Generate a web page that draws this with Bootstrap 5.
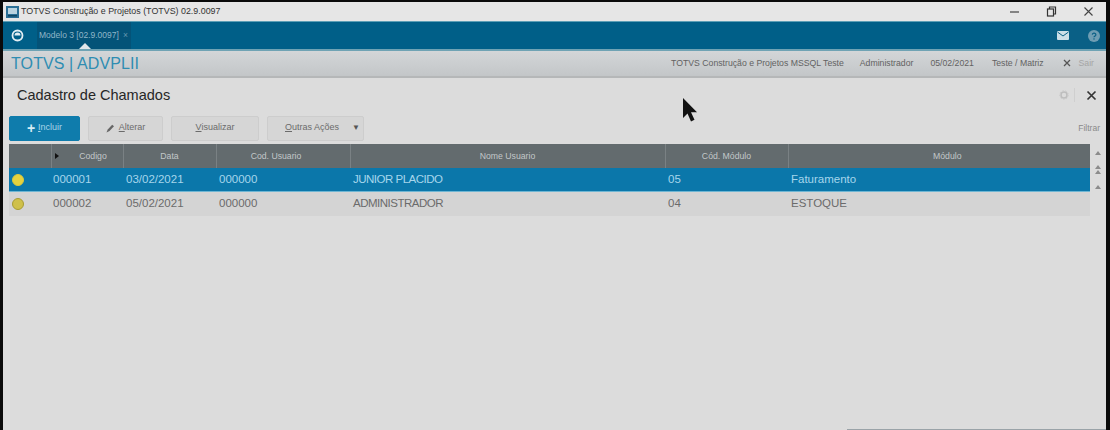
<!DOCTYPE html>
<html lang="pt-BR">
<head>
    <meta charset="UTF-8">
    <title>Cadastro de Chamados</title>
    <link href="https://cdn.jsdelivr.net/npm/bootstrap@5.3.0/dist/css/bootstrap.min.css" rel="stylesheet">
    <style>
        html, body { height: 100%; overflow: hidden; }
        body { font-family: "Liberation Sans", Arial, sans-serif; background: #0a0a0a; color: #666; padding: 2px 4px 0 3px; }
        .app-frame { height: 428px; background: #dcdcdc; }
        .title-bar { height: 19px; background: #e6e6e6; color: #333; font-size: 8.9px; padding: 0 12px 0 3px; }
        .title-bar .app-ico { width: 13px; height: 12px; margin-right: 2px; }
        .win-btns { gap: 26px; }
        .tab-bar { height: 30px; background: #005f88; border-top: 1px solid #5d9fb6; border-bottom: 2px solid #6fa3b4; padding-left: 8px; }
        .tab-item { height: 27px; width: 94px; margin-left: 13px; padding-left: 2px; background: #045378; color: #8fb6c8; font-size: 8.5px; position: relative; white-space: nowrap; }
        .tab-item::after { content: ""; position: absolute; left: 42px; bottom: 0; border: 6px solid transparent; border-top: 0; border-bottom-color: #dfe6ea; }
        .tab-x { margin-left: 4px; opacity: .7; }
        .tab-tools { background: #0a6086; height: 27px; gap: 19px; padding: 0 6px 0 7px; }
        .brand-bar { height: 27px; background: linear-gradient(#d3d6d8, #c3c6c8); border-bottom: 2px solid #b5b7b8; }
        .brand-name { color: #2f8db2; font-size: 16px; padding-left: 8px; line-height: 1; letter-spacing: .1px; }
        .brand-info { font-size: 8.7px; color: #626262; padding-right: 12px; }
        .brand-info span { white-space: nowrap; }
        .info-org { margin-right: 16px; }
        .info-user { margin-right: 17px; }
        .info-date { margin-right: 18px; }
        .info-branch { margin-right: 19px; }
        .info-exit { color: #a5a5a5; margin-left: 8px; }
        .page-head { height: 34px; padding: 0 9px 0 14px; }
        .page-title { font-size: 14.5px; color: #262626; margin: 0; padding-top: 1px; font-weight: 400; }
        .head-sep { width: 1px; height: 14px; background: #cfcfcf; margin: 0 11px 0 5px; }
        .action-bar { height: 32px; padding: 0 6px 0 6px; }
        .act-btn { height: 25px; font-size: 9px; color: #6b6b6b; background: #d6d6d6; border: 1px solid #cdcdcd; border-radius: 2px; padding: 0; margin-right: 8px; }
        .act-btn:hover { background: #d6d6d6; color: #6b6b6b; border-color: #cdcdcd; }
        .act-main { width: 71px; background: #0f7cac; border-color: #0f7cac; color: #a9d5e8; }
        .act-main:hover { background: #0f7cac; border-color: #0f7cac; color: #a9d5e8; }
        .act-main b { color: #d5ecf5; font-size: 14px; font-weight: 700; line-height: 1; margin-right: 3px; }
        .act-edit { width: 75px; }
        .act-view { width: 88px; }
        .act-more { width: 97px; justify-content: space-between; padding: 0 3px 0 17px; margin-right: 0; }
        .act-more i { font-style: normal; font-size: 8px; color: #555; }
        .filter-link { font-size: 8.5px; color: #8a8a8a; }
        .grid-area { padding-left: 6px; }
        .grid-wrap { width: 1081px; }
        .data-grid { table-layout: fixed; width: 1081px; margin: 0; border-collapse: collapse; }
        .data-grid th, .data-grid td { padding: 0 0 0 3px; font-weight: 400; vertical-align: middle; border: 0; box-shadow: none; white-space: nowrap; }
        .data-grid th { height: 24px; padding: 2px 0 0; background: #636b6e; color: #c2c7c9; font-size: 8.7px; text-align: center; border-left: 1px solid #7a8184; }
        .data-grid th:first-child { border-left: 0; }
        .data-grid th.head-code { padding-left: 12px; }
        .data-grid th.head-user { padding-right: 14px; }
        .data-grid th.head-module { padding-left: 16px; }
        .data-grid td { height: 24px; font-size: 11.5px; color: #6b6b6b; background: #d4d4d4; }
        .data-grid td:nth-child(2) { padding-left: 2px; }
        .data-grid td.cell-name { letter-spacing: -.5px; }
        .data-grid tr.row-on td { background: #0b77aa; color: #a6d6ec; box-shadow: inset 0 -1px 0 #6fb6d3; }
        .sort-mark { display: inline-block; border: 3px solid transparent; border-left: 4px solid #111; border-right: 0; float: left; margin: 3px 0 0 -9px; }
        .status-dot { display: block; width: 12px; height: 12px; border-radius: 50%; background: #cfc04a; border: 1px solid #a89c32; }
        .row-on .status-dot { background: #e4d23f; border-color: #d8c93c; }
        .grid-scroll { width: 14px; margin-left: 1px; padding-top: 6px; gap: 9px; }
        .mouse-arrow { position: absolute; left: 682px; top: 98px; }
        .foot-edge { position: absolute; left: 847px; right: 4px; bottom: 0; height: 1px; background: #9aa3a8; }
    </style>
</head>
<body>
<div class="app-frame d-flex flex-column">
    <div class="title-bar d-flex align-items-center flex-shrink-0">
        <svg class="app-ico" viewBox="0 0 13 12"><rect width="13" height="12" fill="#2a6f96"/><rect x="2" y="2" width="9" height="6" fill="#b9d3e0"/><rect x="2" y="9" width="9" height="1.5" fill="#0f4664"/></svg>
        <span>TOTVS Construção e Projetos (TOTVS) 02.9.0097</span>
        <div class="win-btns d-flex align-items-center ms-auto">
            <svg width="11" height="11" viewBox="0 0 11 11"><path d="M1 6h9" stroke="#444" stroke-width="1.2"/></svg>
            <svg width="11" height="11" viewBox="0 0 11 11" fill="none" stroke="#333" stroke-width="1.2"><rect x="1.5" y="3" width="6" height="7"/><path d="M3.5 3V1h6v7H7.500"/></svg>
            <svg width="11" height="11" viewBox="0 0 11 11"><path d="M1.500 1.500l8 8M9.500 1.500l-8 8" stroke="#444" stroke-width="1.100"/></svg>
        </div>
    </div>

    <div class="tab-bar d-flex align-items-center flex-shrink-0">
        <svg width="13" height="13" viewBox="0 0 13 13" fill="none"><circle cx="6.500" cy="6.500" r="5" stroke="#e3eef3" stroke-width="1.800"/><path d="M3.500 6.500a3 3 0 0 1 6 0z" fill="#e3eef3"/></svg>
        <div class="tab-item d-flex align-items-center">Modelo 3 [02.9.0097]<span class="tab-x">×</span></div>
        <div class="tab-tools d-flex align-items-center ms-auto">
            <svg width="12" height="9" viewBox="0 0 12 9"><rect width="12" height="9" rx="1" fill="#cfe0e8"/><path d="M0.500 1l5.500 4 5.500-4" fill="none" stroke="#0a6086"/></svg>
            <svg width="12" height="12" viewBox="0 0 12 12"><circle cx="6" cy="6" r="6" fill="#6f9db3"/><path d="M4.300 4.600a1.800 1.600 0 1 1 2.600 1.500c-.6.300-.9.600-.9 1.200" fill="none" stroke="#0a6086" stroke-width="1.200"/><rect x="5.400" y="8.300" width="1.200" height="1.300" fill="#0a6086"/></svg>
        </div>
    </div>

    <div class="brand-bar d-flex align-items-center justify-content-between flex-shrink-0">
        <div class="brand-name">TOTVS | ADVPLII</div>
        <div class="brand-info d-flex align-items-center">
            <span class="info-org">TOTVS Construção e Projetos MSSQL Teste</span>
            <span class="info-user">Administrador</span>
            <span class="info-date">05/02/2021</span>
            <span class="info-branch">Teste / Matriz</span>
            <svg width="8" height="8" viewBox="0 0 8 8"><path d="M1 1l6 6M7 1l-6 6" stroke="#555" stroke-width="1.300"/></svg>
            <span class="info-exit">Sair</span>
        </div>
    </div>

    <div class="page-head d-flex align-items-center flex-shrink-0">
        <h1 class="page-title">Cadastro de Chamados</h1>
        <svg class="ms-auto" width="10" height="10" viewBox="0 0 10 10" fill="none"><circle cx="5" cy="5" r="3" stroke="#bdbdbd" stroke-width="1.500"/><circle cx="5" cy="5" r="4.300" stroke="#c9c9c9" stroke-dasharray="1.500 1.500"/></svg>
        <span class="head-sep"></span>
        <svg width="11" height="11" viewBox="0 0 11 11"><path d="M1.500 1.500l8 8M9.500 1.500l-8 8" stroke="#333" stroke-width="1.700"/></svg>
    </div>

    <div class="action-bar d-flex align-items-center flex-shrink-0">
        <button class="btn act-btn act-main d-flex align-items-center justify-content-center"><b>+</b><u>I</u>ncluir</button>
        <button class="btn act-btn act-edit d-flex align-items-center justify-content-center"><svg class="me-1" width="9" height="9" viewBox="0 0 9 9"><path d="M0.500 8.500l1.200-3 4.500-4.800 1.800 1.600-4.500 4.800z" fill="#666"/></svg><u>A</u>lterar</button>
        <button class="btn act-btn act-view d-flex align-items-center justify-content-center"><u>V</u>isualizar</button>
        <button class="btn act-btn act-more d-flex align-items-center"><span><u>O</u>utras Ações</span><i>▼</i></button>
        <span class="filter-link ms-auto">Filtrar</span>
    </div>

    <div class="grid-area d-flex flex-shrink-0">
        <div class="grid-wrap">
            <table class="table data-grid">
                <colgroup>
                    <col style="width:42px"><col style="width:72px"><col style="width:93px"><col style="width:134px"><col style="width:315px"><col style="width:123px"><col style="width:302px">
                </colgroup>
                <thead>
                <tr>
                    <th></th>
                    <th class="head-code"><span class="sort-mark"></span>Codigo</th>
                    <th>Data</th>
                    <th class="head-user">Cod. Usuario</th>
                    <th>Nome Usuario</th>
                    <th>Cód. Módulo</th>
                    <th class="head-module">Módulo</th>
                </tr>
                </thead>
                <tbody id="gridRows"></tbody>
            </table>
        </div>
        <div class="grid-scroll d-flex flex-column align-items-center">
            <svg width="8" height="6" viewBox="0 0 8 6"><path d="M4 1l3 4H1z" fill="#8b8b8b"/></svg>
            <svg width="8" height="10" viewBox="0 0 8 10"><path d="M4 0l3 4H1zM4 5l3 4H1z" fill="#8b8b8b"/></svg>
            <svg width="8" height="6" viewBox="0 0 8 6"><path d="M4 1l3 4H1z" fill="#8b8b8b"/></svg>
        </div>
    </div>
</div>

<svg class="mouse-arrow" width="16" height="26" viewBox="0 0 16 26"><path d="M1 0v20l4.500-4.500 3.500 8 3.500-1.700-3.500-7.500h6z" fill="#111"/></svg>
<div class="foot-edge"></div>

<script>
    const rows = [
        { on: true, codigo: '000001', data: '03/02/2021', usuario: '000000', nome: 'JUNIOR PLACIDO', codModulo: '05', modulo: 'Faturamento' },
        { on: false, codigo: '000002', data: '05/02/2021', usuario: '000000', nome: 'ADMINISTRADOR', codModulo: '04', modulo: 'ESTOQUE' }
    ];

    const gridRows = document.getElementById('gridRows');
    rows.forEach(row => {
        const tr = document.createElement('tr');
        if (row.on) tr.className = 'row-on';
        tr.innerHTML = `
            <td><span class="status-dot"></span></td>
            <td>${row.codigo}</td>
            <td>${row.data}</td>
            <td>${row.usuario}</td>
            <td class="cell-name">${row.nome}</td>
            <td>${row.codModulo}</td>
            <td>${row.modulo}</td>
        `;
        gridRows.appendChild(tr);
    });
</script>
</body>
</html>
